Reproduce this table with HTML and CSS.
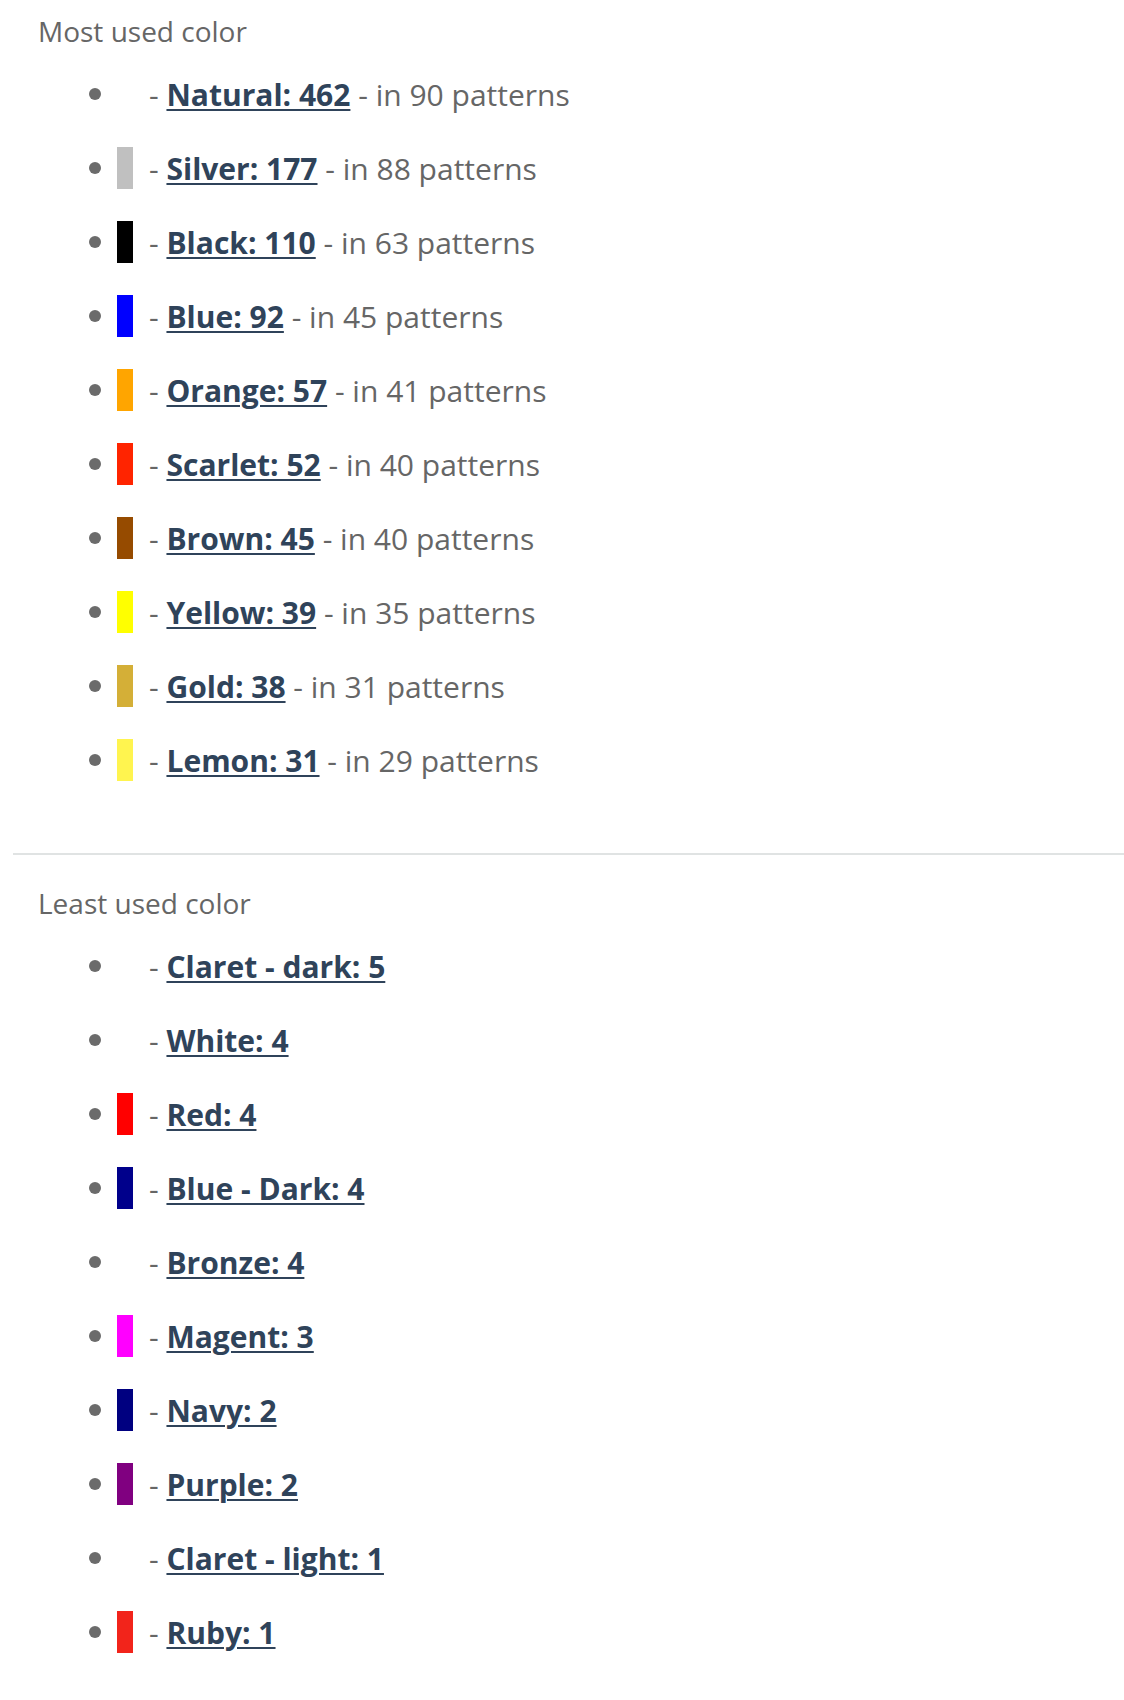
FILE: index.html
```html
<!DOCTYPE html>
<html>
<head>
<meta charset="utf-8">
<link rel="stylesheet" href="styles.css">
</head>
<body>
<div class="page">
  <section class="block block-most">
    <h3 class="title">Most used color</h3>
    <ul class="colors">
      <li class="row"><span class="dot"></span><span class="swatch"></span><span class="txt">- <a href="#">Natural: 462</a> - in 90 patterns</span></li>
      <li class="row"><span class="dot"></span><span class="swatch" style="background:#c0c0c0"></span><span class="txt">- <a href="#">Silver: 177</a> - in 88 patterns</span></li>
      <li class="row"><span class="dot"></span><span class="swatch" style="background:#000000"></span><span class="txt">- <a href="#">Black: 110</a> - in 63 patterns</span></li>
      <li class="row"><span class="dot"></span><span class="swatch" style="background:#0000ff"></span><span class="txt">- <a href="#">Blue: 92</a> - in 45 patterns</span></li>
      <li class="row"><span class="dot"></span><span class="swatch" style="background:#ffa500"></span><span class="txt">- <a href="#">Orange: 57</a> - in 41 patterns</span></li>
      <li class="row"><span class="dot"></span><span class="swatch" style="background:#ff2400"></span><span class="txt">- <a href="#">Scarlet: 52</a> - in 40 patterns</span></li>
      <li class="row"><span class="dot"></span><span class="swatch" style="background:#964b00"></span><span class="txt">- <a href="#">Brown: 45</a> - in 40 patterns</span></li>
      <li class="row"><span class="dot"></span><span class="swatch" style="background:#ffff00"></span><span class="txt">- <a href="#">Yellow: 39</a> - in 35 patterns</span></li>
      <li class="row"><span class="dot"></span><span class="swatch" style="background:#d4af37"></span><span class="txt">- <a href="#">Gold: 38</a> - in 31 patterns</span></li>
      <li class="row"><span class="dot"></span><span class="swatch" style="background:#fff44f"></span><span class="txt">- <a href="#">Lemon: 31</a> - in 29 patterns</span></li>
    </ul>
  </section>
  <hr class="divider">
  <section class="block block-least">
    <h3 class="title">Least used color</h3>
    <ul class="colors">
      <li class="row"><span class="dot"></span><span class="swatch"></span><span class="txt">- <a href="#">Claret - dark: 5</a></span></li>
      <li class="row"><span class="dot"></span><span class="swatch"></span><span class="txt">- <a href="#">White: 4</a></span></li>
      <li class="row"><span class="dot"></span><span class="swatch" style="background:#ff0000"></span><span class="txt">- <a href="#">Red: 4</a></span></li>
      <li class="row"><span class="dot"></span><span class="swatch" style="background:#00008b"></span><span class="txt">- <a href="#">Blue - Dark: 4</a></span></li>
      <li class="row"><span class="dot"></span><span class="swatch"></span><span class="txt">- <a href="#">Bronze: 4</a></span></li>
      <li class="row"><span class="dot"></span><span class="swatch" style="background:#ff00ff"></span><span class="txt">- <a href="#">Magent: 3</a></span></li>
      <li class="row"><span class="dot"></span><span class="swatch" style="background:#000080"></span><span class="txt">- <a href="#">Navy: 2</a></span></li>
      <li class="row"><span class="dot"></span><span class="swatch" style="background:#800080"></span><span class="txt">- <a href="#">Purple: 2</a></span></li>
      <li class="row"><span class="dot"></span><span class="swatch"></span><span class="txt">- <a href="#">Claret - light: 1</a></span></li>
      <li class="row"><span class="dot"></span><span class="swatch" style="background:#f2241b"></span><span class="txt">- <a href="#">Ruby: 1</a></span></li>
    </ul>
  </section>
</div>
</body>
</html>
```
FILE: styles.css
```css
html, body {
  margin: 0;
  padding: 0;
  background: #ffffff;
}
body {
  font-family: "Open Sans", "DejaVu Sans", sans-serif;
  color: #666666;
}
.page {
  padding-left: 13px;
}
.block {
  padding: 12px 0 0 25px;
}
.title {
  margin: 0;
  font-size: 28px;
  font-weight: 400;
  line-height: 38px;
  color: #666666;
}
.colors {
  list-style: none;
  margin: 7px 0 0 0;
  padding: 0 0 0 51px;
}
.row {
  display: flex;
  align-items: center;
  height: 74px;
  font-size: 30px;
}
.dot {
  width: 12px;
  height: 12px;
  border-radius: 50%;
  background: #6b6b6b;
  flex: none;
}
.swatch {
  width: 16px;
  height: 42px;
  margin-left: 16px;
  flex: none;
}
.txt {
  margin-left: 16px;
  white-space: nowrap;
}
.txt a {
  color: #2f435a;
  font-weight: 700;
  text-decoration: underline;
  text-decoration-thickness: 2px;
  text-underline-offset: 3px;
}
.divider {
  border: 0;
  height: 2px;
  background: #e0e3e3;
  margin: 56px 0 0 0;
}
.block-least {
  padding-top: 29px;
}
```
